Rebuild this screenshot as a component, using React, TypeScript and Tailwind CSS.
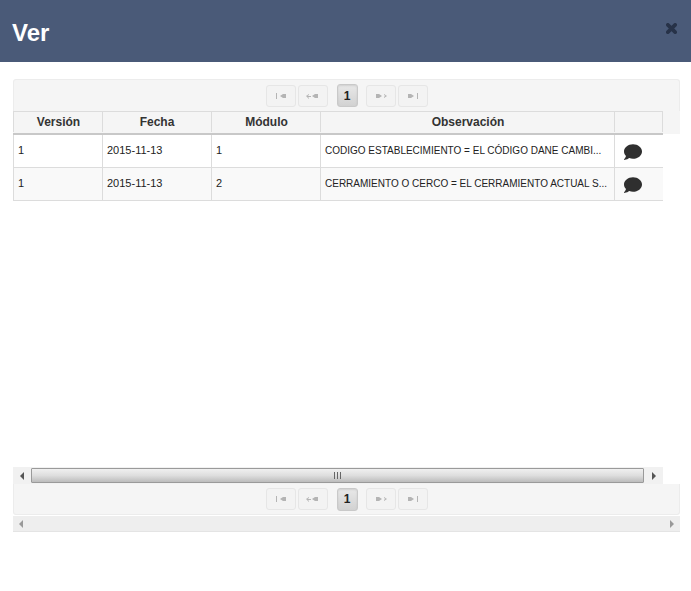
import { FaComment } from "react-icons/fa";

const rows = [
  { version: "1", fecha: "2015-11-13", modulo: "1", obs: "CODIGO ESTABLECIMIENTO = EL CÓDIGO DANE CAMBI..." },
  { version: "1", fecha: "2015-11-13", modulo: "2", obs: "CERRAMIENTO O CERCO = EL CERRAMIENTO ACTUAL S..." },
];

function PagerIcon({ kind }: { kind: "first" | "prev" | "next" | "last" }) {
  return (
    <svg width="14" height="8" viewBox="0 0 14 8" className="text-[#b4b4b4]" fill="currentColor">
      {kind === "first" && (
        <>
          <rect x="2" y="1" width="1" height="6" />
          <path d="M6 4l3-2h3v4H9z" />
        </>
      )}
      {kind === "prev" && (
        <>
          <path d="M0 4l3-2v1L1.5 4H5v1H2l1 1v1z" />
          <path d="M6 4l3-2h3v4H9z" />
        </>
      )}
      {kind === "next" && (
        <>
          <path d="M2 2h3l3 2-3 2H2z" />
          <path d="M8 4h3.5L10 3V2l3 2-3 2V5l1-1z" />
        </>
      )}
      {kind === "last" && (
        <>
          <path d="M2 2h3l3 2-3 2H2z" />
          <rect x="11" y="1" width="1" height="6" />
        </>
      )}
    </svg>
  );
}

function PagerButton({ kind }: { kind: "first" | "prev" | "next" | "last" }) {
  return (
    <button className="flex h-[22px] w-[30px] items-center justify-center rounded-[3px] border border-[#e6e6e6] bg-[#f3f3f3]">
      <PagerIcon kind={kind} />
    </button>
  );
}

function PagerButtons() {
  return (
    <div className="flex items-center pl-[1px]">
      <PagerButton kind="first" />
      <div className="ml-[2px]">
        <PagerButton kind="prev" />
      </div>
      <button className="ml-[9px] mr-[8px] flex h-[23px] w-[21px] items-center justify-center rounded-[3px] border border-[#c9c9c9] bg-gradient-to-b from-[#e8e8e8] to-[#d2d2d2] pr-[1px] text-[12px] font-bold text-[#222] shadow-[inset_0_1px_2px_rgba(0,0,0,0.1)]">
        1
      </button>
      <PagerButton kind="next" />
      <div className="ml-[2px]">
        <PagerButton kind="last" />
      </div>
    </div>
  );
}

export default function App() {
  return (
    <div className="h-[591px] w-[691px] overflow-hidden bg-white font-['Liberation_Sans',Arial,sans-serif] text-[#333]">
      <header className="flex h-[62px] items-start justify-between bg-[#4a5a78] pl-[12px] pr-[14px]">
        <h1 className="mt-[19px] text-[24px] font-bold leading-[28px] text-white">Ver</h1>
        <svg width="11" height="11" viewBox="0 0 12 12" className="mt-[23px] text-[#273248]" stroke="currentColor" strokeWidth="4" strokeLinecap="round">
          <path d="M2 2l8 8M10 2l-8 8" />
        </svg>
      </header>

      <div className="ml-[13px] mt-[17px] w-[667px]">
        <div className="flex h-[32px] w-full items-center justify-center rounded-t-[3px] border border-b-0 border-[#ececec] bg-[#f5f5f5]">
          <PagerButtons />
        </div>

        <div className="h-[356px] w-full">
          <div className="h-[23px] w-full bg-[#f5f5f5]">
            <div className="flex h-[24px] w-[650px] border-b-2 border-t border-b-[#c8c8c8] border-t-[#dcdcdc] bg-[#f5f5f5] pb-[1px] text-[12px] font-bold text-[#333]">
              <div className="flex w-[90px] items-center justify-center border-l border-r border-[#dcdcdc] pl-[1px]">Versión</div>
              <div className="flex w-[109px] items-center justify-center border-r border-[#dcdcdc]">Fecha</div>
              <div className="flex w-[109px] items-center justify-center border-r border-[#dcdcdc] pl-[1px]">Módulo</div>
              <div className="flex w-[294px] items-center justify-center border-r border-[#dcdcdc] pl-[1px]">Observación</div>
              <div className="w-[48px] border-r border-[#dcdcdc]" />
            </div>
          </div>
          <div className="pt-[1px]">
            {rows.map((row, i) => (
              <div
                key={row.modulo}
                className={`flex h-[33px] w-[650px] border-b border-[#dcdcdc] text-[11px] text-[#222] ${i === 1 ? "bg-[#f9f9f9]" : "bg-white"}`}
              >
                <div className="flex w-[90px] items-center border-l border-r border-[#dcdcdc] pb-[1px] pl-[4px]">{row.version}</div>
                <div className="flex w-[109px] items-center border-r border-[#dcdcdc] pb-[1px] pl-[4px]">{row.fecha}</div>
                <div className="flex w-[109px] items-center border-r border-[#dcdcdc] pb-[1px] pl-[4px]">{row.modulo}</div>
                <div className="flex w-[294px] items-center whitespace-nowrap border-r border-[#dcdcdc] pb-[1px] pl-[4px] text-[10px]">{row.obs}</div>
                <div className="flex w-[48px] items-center pl-[9px] pt-[2px]">
                  <FaComment className="text-[#2f2f2f]" size={18} />
                </div>
              </div>
            ))}
          </div>
        </div>

        <div className="flex h-[17px] w-[650px] items-center bg-[#f1f1f1]">
          <div className="flex w-[18px] items-center justify-center">
            <div className="h-0 w-0 border-y-[4px] border-r-[4px] border-y-transparent border-r-[#555]" />
          </div>
          <div className="flex h-[15px] flex-1 items-center justify-center rounded-[1px] border border-[#9a9a9a] bg-gradient-to-b from-[#f0f0f0] via-[#dedede] to-[#bcbcbc]">
            <svg width="8" height="7" viewBox="0 0 8 7" className="text-[#666]" fill="currentColor">
              <rect x="0" y="0" width="1" height="7" />
              <rect x="3" y="0" width="1" height="7" />
              <rect x="6" y="0" width="1" height="7" />
            </svg>
          </div>
          <div className="flex w-[19px] items-center justify-center">
            <div className="h-0 w-0 border-y-[4px] border-l-[4px] border-y-transparent border-l-[#555]" />
          </div>
        </div>

        <div className="flex h-[31px] w-full items-center justify-center rounded-b-[3px] border border-t-0 border-[#ececec] bg-[#f5f5f5]">
          <PagerButtons />
        </div>

        <div className="mt-[1px] flex h-[16px] w-full items-center justify-between border-b border-[#e4e4e4] bg-[#eeeeee] px-[6px]">
          <div className="h-0 w-0 border-y-[4px] border-r-[4px] border-y-transparent border-r-[#999]" />
          <div className="h-0 w-0 border-y-[4px] border-l-[4px] border-y-transparent border-l-[#999]" />
        </div>
      </div>
    </div>
  );
}
